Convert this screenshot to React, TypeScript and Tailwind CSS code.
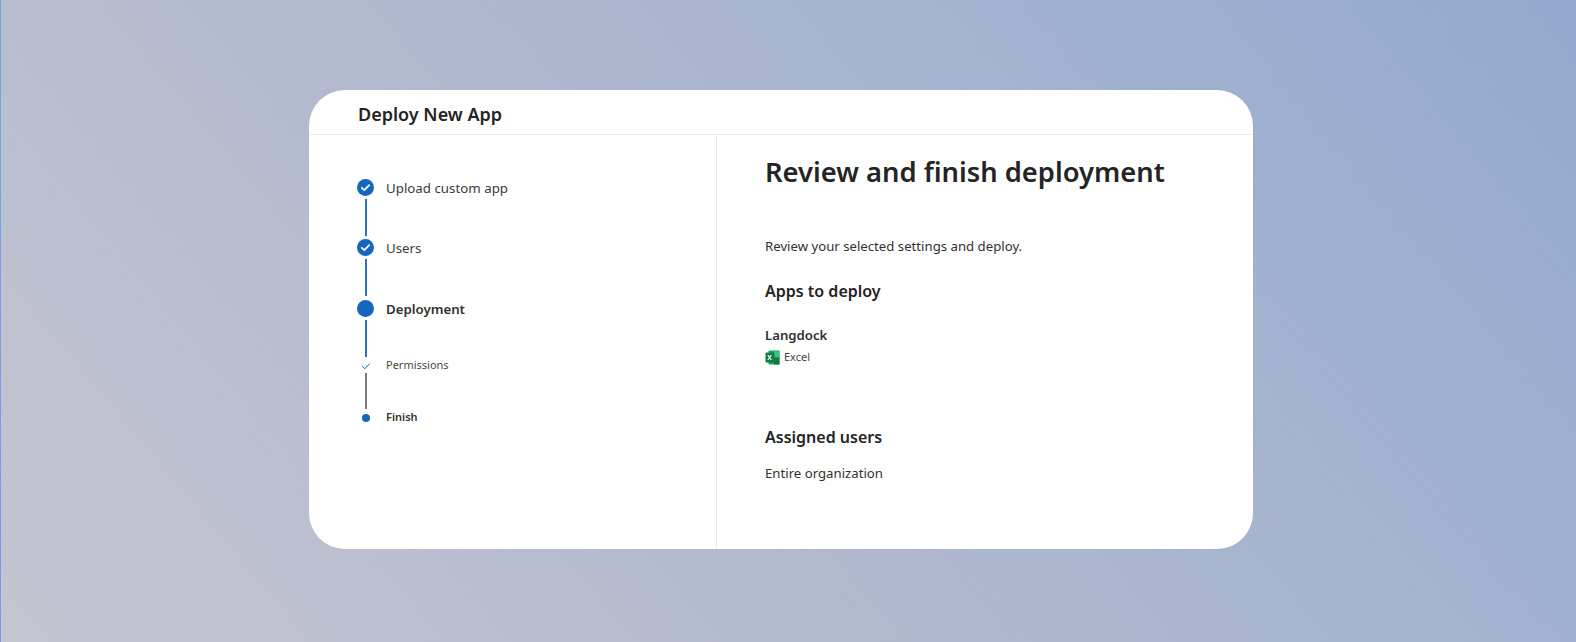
const font = "font-['Noto_Sans','Open_Sans',sans-serif]";

type StepKind = "done" | "current" | "subdone" | "subcurrent";

interface Step {
  label: string;
  kind: StepKind;
  lineClass?: string;
}

const steps: Step[] = [
  { label: "Upload custom app", kind: "done", lineClass: "mt-[3px] mb-[3px] h-[37px] w-[2px] bg-[#2a72bf]" },
  { label: "Users", kind: "done", lineClass: "mt-[3px] mb-[4px] h-[37px] w-[2px] bg-[#2a72bf]" },
  { label: "Deployment", kind: "current", lineClass: "mt-[3px] h-[37px] w-[2px] bg-[#2a72bf]" },
  { label: "Permissions", kind: "subdone", lineClass: "mt-[-1px] h-[36px] w-[2px] bg-[#7d7a78]" },
  { label: "Finish", kind: "subcurrent" },
];

function StepIcon({ kind }: { kind: StepKind }) {
  if (kind === "done") {
    return (
      <svg width="17" height="17" viewBox="0 0 17 17">
        <circle cx="8.5" cy="8.5" r="8.5" fill="#1467bd" />
        <path d="M4.8 8.8l2.5 2.4 4.9-5" fill="none" stroke="#fff" strokeWidth="1.7" strokeLinecap="round" strokeLinejoin="round" />
      </svg>
    );
  }
  if (kind === "current") return <div className="h-[17px] w-[17px] rounded-full bg-[#1467bd]" />;
  if (kind === "subdone") {
    return (
      <svg width="10" height="10" viewBox="0 0 10 10">
        <path d="M1.5 5.4l2.4 2.3 4.6-4.9" fill="none" stroke="#1467bd" strokeWidth="1" strokeLinecap="round" strokeLinejoin="round" />
      </svg>
    );
  }
  return <div className="h-2 w-2 rounded-full bg-[#1467bd]" />;
}

function Stepper() {
  return (
    <div className="flex flex-col pl-[48px] pt-[44px]">
      {steps.map((s) => (
        <div key={s.label} className="flex">
          <div className="flex w-[17px] flex-col items-center">
            <div className="flex h-[17px] w-[17px] items-center justify-center">
              <StepIcon kind={s.kind} />
            </div>
            {s.lineClass && <div className={s.lineClass} />}
          </div>
          <div
            className={
              s.kind === "done"
                ? "ml-[12px] h-[17px] text-[13.3px] leading-[18px] text-[#3b3a39]"
                : s.kind === "current"
                  ? "ml-[12px] h-[17px] text-[13.25px] leading-[18px] font-semibold text-[#323130]"
                  : s.kind === "subdone"
                    ? "ml-[12px] h-[17px] text-[11px] leading-[16px] text-[#484644]"
                    : "ml-[12px] h-[17px] text-[11px] leading-[16px] font-semibold text-[#323130]"
            }
          >
            {s.label}
          </div>
        </div>
      ))}
    </div>
  );
}

function ExcelIcon() {
  return (
    <svg width="15" height="15" viewBox="0 0 15 15">
      <rect x="3.5" y="0.5" width="11" height="14" rx="1" fill="#21a366" />
      <rect x="9" y="0.5" width="5.5" height="7" fill="#33c481" />
      <rect x="9" y="7.5" width="5.5" height="7" fill="#107c41" />
      <rect x="0.5" y="2.5" width="9" height="10" rx="1" fill="#107c41" />
      <path d="M2.8 5l3.6 5M6.4 5l-3.6 5" stroke="#fff" strokeWidth="1.2" />
    </svg>
  );
}

export default function App() {
  return (
    <div
      className={`h-[642px] w-full border-l border-[#6ea3e8] bg-[linear-gradient(50deg,#c5c5d1_0%,#b4bace_35%,#a6b4d0_65%,#93a9cd_100%)] pl-[308px] pt-[90px] ${font}`}
    >
      <div className="flex h-[459px] w-[944px] flex-col overflow-hidden rounded-[36px] bg-white">
        <div className="flex h-[45px] shrink-0 items-center border-b border-[#edebe9] pl-[49px] pt-[5px] text-[18px] font-semibold text-[#242424]">
          Deploy New App
        </div>
        <div className="flex flex-1">
          <div className="w-[408px] shrink-0 border-r border-[#edebe9]">
            <Stepper />
          </div>
          <div className="flex-1 pl-[48px] text-[13.2px] text-[#323130]">
            <h1 className="mt-[15px] text-[27.35px] leading-[44px] font-semibold text-[#242424]">
              Review and finish deployment
            </h1>
            <p className="mt-[42px] leading-[20px]">Review your selected settings and deploy.</p>
            <h2 className="mt-[24px] text-[16px] leading-[22px] font-semibold text-[#242424]">Apps to deploy</h2>
            <div className="mt-[23px] leading-[20px] font-semibold text-[#323130]">Langdock</div>
            <div className="mt-[4px] flex items-center gap-[4px] text-[11px] leading-[16px] text-[#484644]">
              <ExcelIcon />
              <span>Excel</span>
            </div>
            <h2 className="mt-[61px] text-[16px] leading-[22px] font-semibold text-[#242424]">Assigned users</h2>
            <p className="mt-[15px] leading-[20px]">Entire organization</p>
          </div>
        </div>
      </div>
    </div>
  );
}
